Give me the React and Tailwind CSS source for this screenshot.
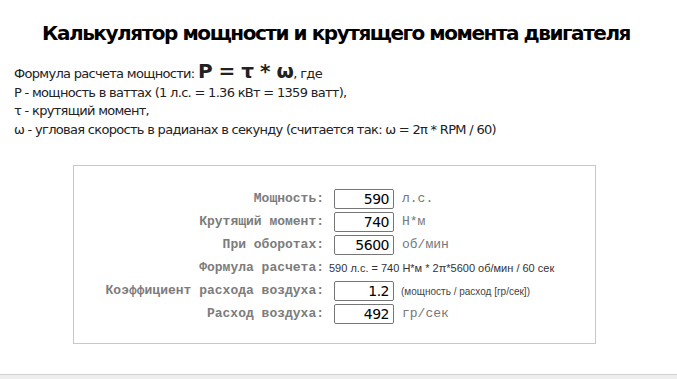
export default function App() {
  const rows = [
    { label: "Мощность:", value: "590", unit: "л.с." },
    { label: "Крутящий момент:", value: "740", unit: "Н*м" },
    { label: "При оборотах:", value: "5600", unit: "об/мин" },
    { label: "Формула расчета:", note: "590 л.с. = 740 Н*м * 2π*5600 об/мин / 60 сек" },
    { label: "Коэффициент расхода воздуха:", value: "1.2", small: "(мощность / расход [гр/сек])" },
    { label: "Расход воздуха:", value: "492", unit: "гр/сек" },
  ];

  return (
    <div className="w-[677px] h-[379px] bg-white flex flex-col overflow-hidden">
      <div className="flex-1 px-[14px]">
        <h1 className="pt-[19px] pl-[28px] whitespace-nowrap text-[20px] font-bold text-black leading-[28px] font-['DejaVu_Sans',sans-serif] tracking-[-1.45px]">
          Калькулятор мощности и крутящего момента двигателя
        </h1>
        <div className="mt-[15px] text-[13px] leading-[18.5px] text-[#222] font-['DejaVu_Sans',sans-serif] tracking-[-0.7px]">
          <p>
            Формула расчета мощности:{" "}
            <span className="text-[20px] font-bold tracking-[-0.5px]">P = τ * ω</span>, где
          </p>
          <p>P - мощность в ваттах (1 л.с. = 1.36 кВт = 1359 ватт),</p>
          <p>τ - крутящий момент,</p>
          <p>ω - угловая скорость в радианах в секунду (считается так: ω = 2π * RPM / 60)</p>
        </div>
        <div className="ml-[59px] mt-[26px] w-[523px] h-[179px] border border-[#c8c8c8] pt-[23px]">
          <div className="flex flex-col gap-[3px]">
            {rows.map((r) => (
              <div key={r.label} className="flex items-center h-[20px]">
                <div className="w-[260px] text-right pr-[10px] font-['Liberation_Mono',monospace] font-bold text-[13px] text-[#7c7c7c]">
                  {r.label}
                </div>
                {r.note ? (
                  <div className="-ml-[5px] text-[11px] text-[#333] font-['Liberation_Sans',sans-serif]">
                    {r.note}
                  </div>
                ) : (
                  <>
                    <div className="w-[60px] h-[20px] border border-[#767676] rounded-[2px] text-right pr-[4px] text-[14px] leading-[18px] text-black font-['DejaVu_Sans',sans-serif] tracking-[-0.5px]">
                      {r.value}
                    </div>
                    {r.unit && (
                      <div className="pl-[8px] font-['Liberation_Mono',monospace] text-[13px] text-[#777]">
                        {r.unit}
                      </div>
                    )}
                    {r.small && (
                      <div className="pl-[7px] text-[10px] text-[#444] font-['Liberation_Sans',sans-serif]">
                        {r.small}
                      </div>
                    )}
                  </>
                )}
              </div>
            ))}
          </div>
        </div>
      </div>
      <div className="h-[5px] border-t border-[#d0d0d0] bg-[#eeeeee]"></div>
    </div>
  );
}
